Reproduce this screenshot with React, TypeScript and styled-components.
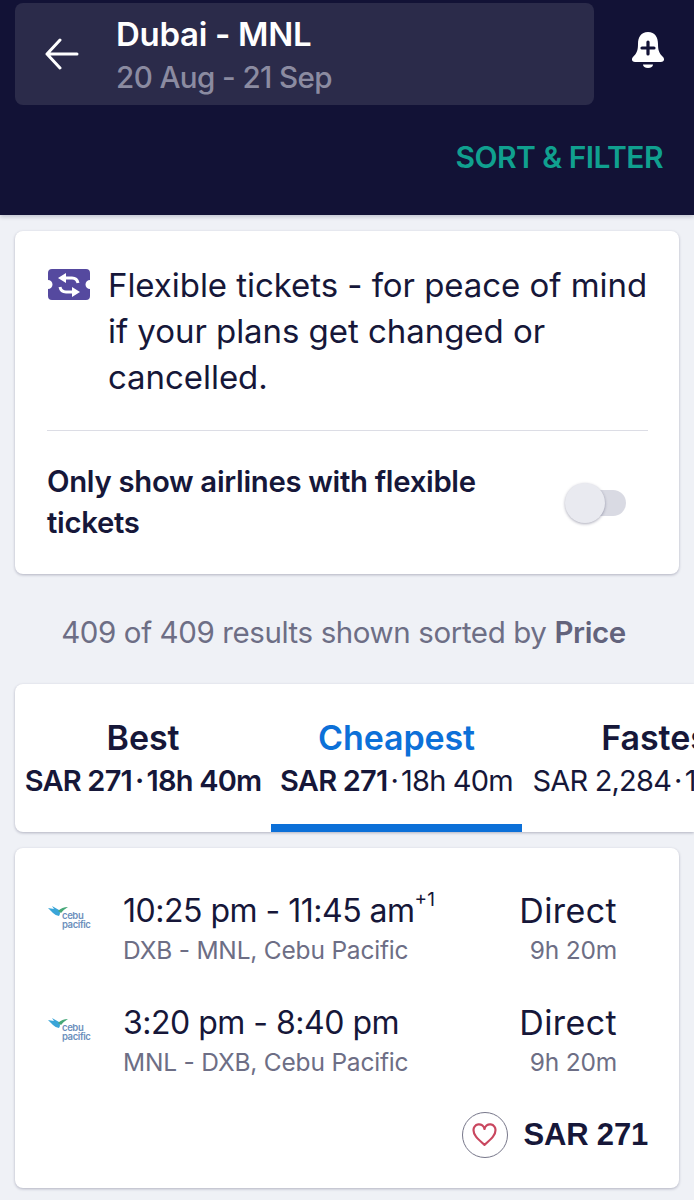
import React from "react";
import styled, { createGlobalStyle } from "styled-components";

const Global = createGlobalStyle`
  html, body { margin: 0; padding: 0; background: #eff1f6; }
  body { font-family: Inter, "Liberation Sans", sans-serif; color: #161739; overflow-x: hidden; }
`;
const Page = styled.div`
  width: 694px; height: 1200px; overflow: hidden; background: #eff1f6;
`;
const Header = styled.header`
  height: 215px; box-sizing: border-box; background: #121236; padding: 3px 29px 0 15px;
  display: flex; flex-direction: column; box-shadow: 0 2px 4px rgba(17,18,58,.2);
`;
const TopRow = styled.div`
  display: flex; align-items: flex-start; justify-content: space-between;
`;
const BellWrap = styled.div`
  margin-top: 28px; display: flex;
`;
const SearchPill = styled.div`
  width: 579px; height: 102px; box-sizing: border-box; border-radius: 8px; background: #2b2b4a;
  display: flex; align-items: center; padding-left: 29px; gap: 36px;
`;
const Route = styled.div`
  display: flex; flex-direction: column; gap: 6px; padding-top: 1px;
`;
const RouteTitle = styled.div`
  font-size: 33px; line-height: 38px; font-weight: 600; color: #fff; letter-spacing: -0.3px;
`;
const RouteDates = styled.div`
  font-size: 29.6px; line-height: 36px; font-weight: 500; color: #8b8ba1; letter-spacing: -0.6px;
`;
const SortFilter = styled.div`
  align-self: flex-end; margin: 34px 2px 0 0; font-size: 30px; line-height: 36px; font-weight: 600;
  color: #10a08f; letter-spacing: -0.55px;
`;
const Content = styled.main`
  padding: 16px 15px 0; display: flex; flex-direction: column;
`;
const Card = styled.section`
  background: #fff; border-radius: 8px; box-shadow: 0 1px 3px rgba(17,18,58,.28);
`;
const FlexCard = styled(Card)`
  height: 343px; box-sizing: border-box; padding: 32px 31px 0 32px; display: flex; flex-direction: column;
`;
const FlexInfo = styled.div`
  display: flex; gap: 17px; padding-bottom: 30px; border-bottom: 1px solid #dcdde5;
`;
const FlexText = styled.div`
  font-size: 33px; line-height: 46px; color: #161739; letter-spacing: -0.05px; margin-top: -1px; flex: 1; min-width: 0;
`;
const TicketIcon = styled.svg`
  flex: none; margin-top: 6px;
`;
const ToggleRow = styled.div`
  display: flex; justify-content: space-between; align-items: center; padding: 30px 22px 0 0;
`;
const ToggleLabel = styled.div`
  width: 460px; font-size: 29.3px; line-height: 41px; font-weight: 600; color: #161739; letter-spacing: -0.3px;
`;
const Toggle = styled.div`
  position: relative; width: 57px; height: 26px; margin-top: 2px; border-radius: 13px; background: #d9dae3;
`;
const Knob = styled.div`
  position: absolute; left: -4px; top: -7px; width: 40px; height: 40px; border-radius: 50%;
  background: #e9eaf0; box-shadow: 0 1px 3px rgba(17,18,58,.35);
`;
const Summary = styled.div`
  height: 110px; padding-top: 6px; box-sizing: border-box; display: flex; align-items: center; justify-content: center; font-size: 29.5px;
  color: #6d6e85; letter-spacing: -0.4px; padding-right: 7px; white-space: nowrap;
  b { font-weight: 600; color: #62637c; }
`;
const TabsCard = styled(Card)`
  height: 148px; margin-right: -15px; border-radius: 8px 0 0 8px; display: flex; overflow: hidden;
`;
const Tab = styled.div<{ $active?: boolean; $w: number }>`
  position: relative; flex: none; width: ${p => p.$w}px; box-sizing: border-box; padding-top: 33px;
  display: flex; flex-direction: column; align-items: center; white-space: nowrap;
  ${p => p.$active ? `&::after { content: ""; position: absolute; left: 0; right: 0; bottom: 0; height: 8px; background: #0c70d8; }` : ""}
`;
const TabTitle = styled.div<{ $active?: boolean }>`
  font-size: 34px; line-height: 42px; font-weight: 600; letter-spacing: -0.1px;
  color: ${p => p.$active ? "#0c70d8" : "#161739"};
`;
const TabMeta = styled.div`
  margin-top: 3px; font-size: 29px; line-height: 38px; letter-spacing: -0.8px; color: #161739;
  b { font-weight: 600; }
`;
const Dot = styled.span`
  margin: 0 3px;
`;
const FlightCard = styled(Card)`
  margin-top: 16px; height: 340px; box-sizing: border-box; padding: 41px 31px 0 32px; display: flex; flex-direction: column;
`;
const Leg = styled.div`
  display: flex; align-items: flex-start; height: 112px;
`;
const Logo = styled.div`
  position: relative; width: 44px; height: 30px; margin-top: 15px; flex: none;
`;
const LogoText = styled.span`
  position: absolute; left: 15px; top: 7px; width: 30px; font-size: 9.5px; line-height: 9px; font-weight: 600;
  color: #6c8fbc; letter-spacing: -0.4px;
`;
const Times = styled.div`
  margin-left: 32px; flex: 1; min-width: 0;
`;
const TimeLine = styled.div`
  font-size: 32px; line-height: 44px; color: #161739; letter-spacing: -0.5px; white-space: nowrap;
  sup { font-size: 19px; line-height: 0; vertical-align: 16px; letter-spacing: 0; }
`;
const StopLabel = styled.div`
  font-size: 34px; line-height: 44px; color: #161739; letter-spacing: 0.4px; white-space: nowrap;
`;
const Detail = styled.div`
  margin-top: 0; font-size: 24.5px; line-height: 34px; color: #6d6e85; letter-spacing: -0.2px; white-space: nowrap;
`;
const Stops = styled.div`
  width: 97px; margin-right: 31px; flex: none; display: flex; flex-direction: column; align-items: flex-end;
`;
const Footer = styled.div`
  display: flex; align-items: center; justify-content: flex-end; gap: 16px; margin-top: -1px;
`;
const HeartButton = styled.div`
  width: 46px; height: 46px; box-sizing: border-box; border: 1.5px solid #77778a; border-radius: 50%;
  display: flex; align-items: center; justify-content: center;
`;
const Price = styled.div`
  font-family: "Liberation Sans", Arial, sans-serif; font-size: 31px; font-weight: 700; color: #161739; letter-spacing: -0.2px;
`;

const CebuLogo = () => (
  <Logo>
    <svg width="30" height="24" viewBox="0 0 30 24" style={{ position: "absolute", left: 0, top: 0 }}>
      <path d="M1 4 L7 5 L5 2 L12 6 Q14 9 12 12 Q9 12 6 9 Z" fill="#3aa5d8" />
      <path d="M11 7 Q15 3 21 3 Q16 6 14 9 Z" fill="#46a878" />
    </svg>
    <LogoText>cebu<br />pacific</LogoText>
  </Logo>
);

const LegRow = ({ time, plus, detail }: { time: string; plus?: boolean; detail: string }) => (
  <Leg>
    <CebuLogo />
    <Times>
      <TimeLine>{time}{plus && <sup>+1</sup>}</TimeLine>
      <Detail>{detail}</Detail>
    </Times>
    <Stops>
      <StopLabel>Direct</StopLabel>
      <Detail>9h 20m</Detail>
    </Stops>
  </Leg>
);

export default function App() {
  return (
    <Page>
      <Global />
      <Header>
        <TopRow>
          <SearchPill>
            <svg width="36" height="32" viewBox="0 0 36 32" fill="none" stroke="#fff" strokeWidth="3" strokeLinecap="round" strokeLinejoin="round">
              <path d="M33 16H3M16 2L3 16l13 14" />
            </svg>
            <Route>
              <RouteTitle>Dubai - MNL</RouteTitle>
              <RouteDates>20 Aug - 21 Sep</RouteDates>
            </Route>
          </SearchPill>
          <BellWrap>
            <svg width="34" height="38" viewBox="0 0 34 38">
              <path d="M17 1C24 1 27 6 27 13c0 6 1 9 5 13 2 2 1 5-2 5H4c-3 0-4-3-2-5 4-4 5-7 5-13C7 6 10 1 17 1z" fill="#fff" />
              <path d="M12 33.500h10c0 2-2 3.500-5 3.500s-5-1.500-5-3.500z" fill="#fff" />
              <path d="M17 11v12M11 17h12" stroke="#121236" strokeWidth="3.200" strokeLinecap="round" />
            </svg>
          </BellWrap>
        </TopRow>
        <SortFilter>SORT &amp; FILTER</SortFilter>
      </Header>
      <Content>
        <FlexCard>
          <FlexInfo>
            <TicketIcon width="44" height="31" viewBox="0 0 44 31">
              <path d="M5 0h34a4 4 0 0 1 4 4v7a4.500 4.500 0 0 0 0 9v7a4 4 0 0 1-4 4H5a4 4 0 0 1-4-4v-7a4.500 4.500 0 0 0 0-9V4a4 4 0 0 1 4-4z" fill="#55499f" />
              <path d="M17 9h8q5 0 6 5M27 23h-8q-5 0-6-5" fill="none" stroke="#fff" strokeWidth="3" />
              <path d="M19 4v10l-8-5zM25 18v10l8-5z" fill="#fff" />
            </TicketIcon>
            <FlexText>Flexible tickets - for peace of mind if your plans get changed or cancelled.</FlexText>
          </FlexInfo>
          <ToggleRow>
            <ToggleLabel>Only show airlines with flexible tickets</ToggleLabel>
            <Toggle><Knob /></Toggle>
          </ToggleRow>
        </FlexCard>
        <Summary><span>409 of 409 results shown sorted by <b>Price</b></span></Summary>
        <TabsCard>
          <Tab $w={256}>
            <TabTitle>Best</TabTitle>
            <TabMeta><b>SAR 271<Dot>·</Dot>18h 40m</b></TabMeta>
          </Tab>
          <Tab $w={251} $active>
            <TabTitle $active>Cheapest</TabTitle>
            <TabMeta><b>SAR 271</b><Dot>·</Dot>18h 40m</TabMeta>
          </Tab>
          <Tab $w={278}>
            <TabTitle>Fastest</TabTitle>
            <TabMeta>SAR 2,284<Dot>·</Dot>11h 30m</TabMeta>
          </Tab>
        </TabsCard>
        <FlightCard>
          <LegRow time="10:25 pm - 11:45 am" plus detail="DXB - MNL, Cebu Pacific" />
          <LegRow time="3:20 pm - 8:40 pm" detail="MNL - DXB, Cebu Pacific" />
          <Footer>
            <HeartButton>
              <svg width="27" height="24" viewBox="0 0 24 22" fill="none" stroke="#c9475f" strokeWidth="2">
                <path d="M12 20C5 14 2 11 2 7a5 5 0 0 1 10-1.500A5 5 0 0 1 22 7c0 4-3 7-10 13z" strokeLinejoin="round" />
              </svg>
            </HeartButton>
            <Price>SAR 271</Price>
          </Footer>
        </FlightCard>
      </Content>
    </Page>
  );
}
